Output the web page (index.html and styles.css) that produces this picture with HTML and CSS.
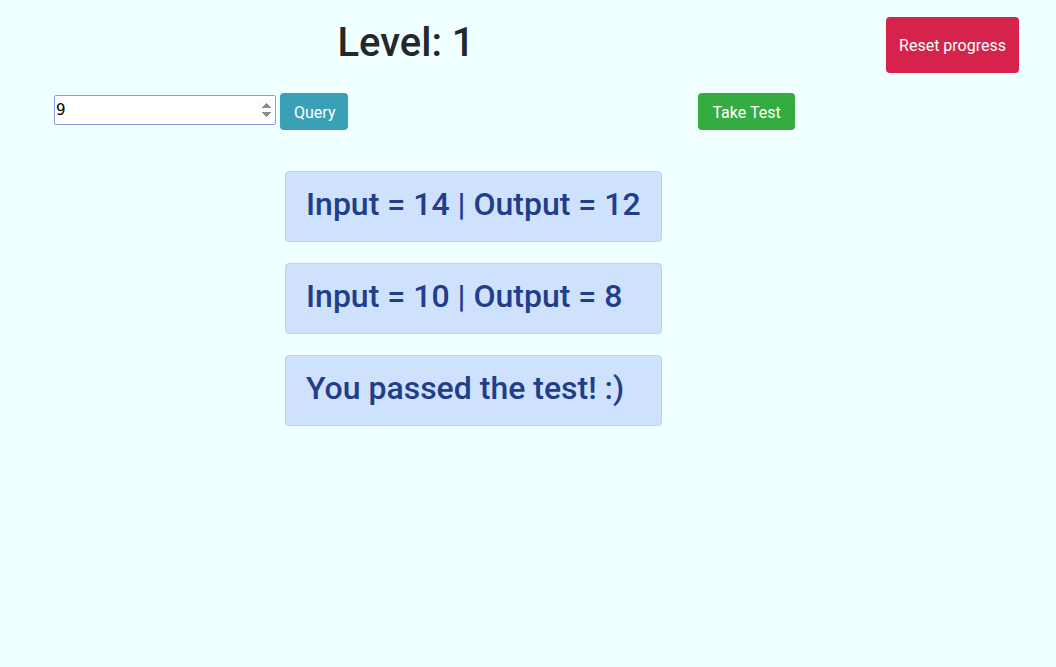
FILE: index.html
```html
<!DOCTYPE html>
<html lang="en">
<head>
<meta charset="utf-8">
<title>Level</title>
<link rel="stylesheet" href="styles.css">
</head>
<body>
<header class="top">
  <div class="title-col"><h1 class="title">Level: 1</h1></div>
  <button class="btn btn-reset">Reset progress</button>
</header>
<div class="controls">
  <input class="num" type="number" value="9">
  <button class="btn btn-query">Query</button>
  <button class="btn btn-test">Take Test</button>
</div>
<main class="results">
  <div class="card">Input = 14 | Output = 12</div>
  <div class="card">Input = 10 | Output = 8</div>
  <div class="card">You passed the test! :)</div>
</main>
</body>
</html>
```

FILE: styles.css
```css
html, body {
  margin: 0;
  padding: 0;
  background: #f0ffff;
  font-family: Roboto, "Liberation Sans", sans-serif;
  color: #25282b;
}

.top {
  display: flex;
  align-items: flex-start;
  padding: 17px 37px 0 0;
}

.title-col {
  flex: 0 0 812px;
  text-align: center;
}

.title {
  margin: 1px 0 0;
  font-size: 40px;
  line-height: 50px;
  font-weight: 500;
  color: #25282b;
}

.btn {
  font-family: Roboto, "Liberation Sans", sans-serif;
  font-size: 16px;
  color: #fff;
  border: 0;
  border-radius: 4px;
  cursor: pointer;
}

.btn-reset {
  margin-left: auto;
  background: #d6234b;
  padding: 17px 13px 15px;
  line-height: 24px;
  height: 56px;
}

.controls {
  display: flex;
  align-items: flex-start;
  padding: 20px 0 0 54px;
}

.num {
  box-sizing: border-box;
  width: 222px;
  height: 30px;
  margin-top: 2px;
  border: 1px solid #8a9ae5;
  border-radius: 2px;
  background: #fff;
  font-family: "DejaVu Sans", sans-serif;
  font-size: 15px;
  padding: 0 1px;
  color: #000;
  outline: none;
}

.num::-webkit-inner-spin-button {
  opacity: 1;
}

.btn-query {
  margin-left: 4px;
  background: #3aa0b5;
  padding: 7px 13px 5px 14px;
  line-height: 25px;
  height: 37px;
}

.btn-test {
  margin-left: 350px;
  background: #35ac40;
  padding: 7px 14px 5px;
  line-height: 25px;
  height: 37px;
}

.results {
  display: flex;
  flex-direction: column;
  gap: 21px;
  margin: 41px 0 0 285px;
  width: 377px;
}

.card {
  box-sizing: border-box;
  height: 71px;
  padding: 13px 20px 0;
  background: #cfe2fd;
  border: 1px solid #b9d3f6;
  border-radius: 4px;
  color: #223d8a;
  font-size: 32px;
  line-height: 38px;
  font-weight: 500;
  white-space: nowrap;
}
```
